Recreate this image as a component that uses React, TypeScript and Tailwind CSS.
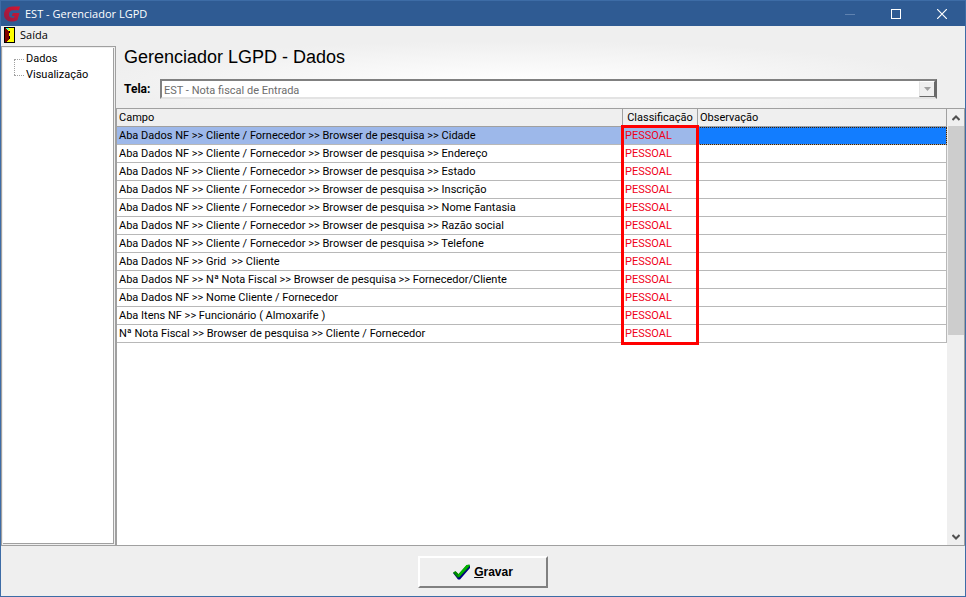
import { useState } from "react";

const tree = ["Dados", "Visualização"];

const rows = [
  "Aba Dados NF >> Cliente / Fornecedor >> Browser de pesquisa >> Cidade",
  "Aba Dados NF >> Cliente / Fornecedor >> Browser de pesquisa >> Endereço",
  "Aba Dados NF >> Cliente / Fornecedor >> Browser de pesquisa >> Estado",
  "Aba Dados NF >> Cliente / Fornecedor >> Browser de pesquisa >> Inscrição",
  "Aba Dados NF >> Cliente / Fornecedor >> Browser de pesquisa >> Nome Fantasia",
  "Aba Dados NF >> Cliente / Fornecedor >> Browser de pesquisa >> Razão social",
  "Aba Dados NF >> Cliente / Fornecedor >> Browser de pesquisa >> Telefone",
  "Aba Dados NF >> Grid  >> Cliente",
  "Aba Dados NF >> Nª Nota Fiscal >> Browser de pesquisa >> Fornecedor/Cliente",
  "Aba Dados NF >> Nome Cliente / Fornecedor",
  "Aba Itens NF >> Funcionário ( Almoxarife )",
  "Nª Nota Fiscal >> Browser de pesquisa >> Cliente / Fornecedor",
];

function Logo() {
  return (
    <svg width="16" height="16" viewBox="0 0 16 16">
      <defs>
        <linearGradient id="logo" x1="0" y1="1" x2="1" y2="0">
          <stop offset="0" stopColor="#8e1d45" />
          <stop offset="1" stopColor="#d8142f" />
        </linearGradient>
      </defs>
      <path
        d="M16 0.5L15 4.2H9C6.5 4.2 5 6 5 8.5C5 10.5 6.2 11.8 8.2 11.8H10L10.5 10H7.8L8.8 7H15.5L13.5 14C11.5 15.2 9 15.8 6.5 15.5C2.5 15 0 12.5 0 8.8C0 4 3.5 0.5 8.5 0.5Z"
        fill="url(#logo)"
      />
    </svg>
  );
}

function DoorIcon() {
  return (
    <svg width="11" height="16" viewBox="0 0 11 16" shapeRendering="crispEdges">
      <rect width="11" height="16" fill="#000" />
      <rect x="1" y="1" width="9" height="14" fill="#ff0" />
      <path d="M1 1H2V2H3V3H4V4H5V13H4V14H3V15H1Z" fill="#800000" />
      <path d="M2 1H4V2H5V3H4V2H2Z" fill="#0ff" />
      <path d="M5 4H6V6H5ZM5 9H6V12H5Z" fill="#000" />
    </svg>
  );
}

function CheckIcon() {
  return (
    <svg width="17" height="16" viewBox="0 0 17 16">
      <path d="M0 9L3 8L6 11L14 2L17 1.5V4L7 15.5H5Z" fill="#000080" />
      <path d="M0 8.5L2.5 7L5.5 10L13.5 1L16.5 0.5V2.5L6 13.5H4.5Z" fill="#008a00" />
      <path d="M5 11L13.5 1.2L16.5 0.8V1.5L6 13Z" fill="#00b400" />
    </svg>
  );
}

function Chevron({ down = false }: { down?: boolean }) {
  return (
    <svg width="8" height="6" viewBox="0 0 8 6">
      <path
        d={down ? "M0.5 1L4 4.5L7.5 1" : "M0.5 5L4 1.5L7.5 5"}
        fill="none"
        stroke="#505050"
        strokeWidth="2"
      />
    </svg>
  );
}

export default function App() {
  const [selected, setSelected] = useState(0);

  return (
    <div className="flex h-screen flex-col border border-t-0 border-[#3d6ca6] bg-[#efefef] font-[Roboto,sans-serif] text-[11px] leading-4 text-black">
      <header className="flex h-[26px] shrink-0 items-center border-t border-[#3d6ca6] bg-[#2f5b93] pl-[3px] text-white">
        <Logo />
        <h1 className="grow pl-[5px] font-['Open_Sans',sans-serif] text-[11px]">
          EST - Gerenciador LGPD
        </h1>
        <button aria-label="Minimizar" className="flex w-[46px] justify-center">
          <svg width="10" height="10" viewBox="0 0 10 10" shapeRendering="crispEdges">
            <path d="M0 5.5H10" stroke="#5f82b0" />
          </svg>
        </button>
        <button aria-label="Maximizar" className="flex w-[46px] justify-center">
          <svg width="10" height="10" viewBox="0 0 10 10" shapeRendering="crispEdges">
            <rect x="0.5" y="0.5" width="9" height="9" fill="none" stroke="#fff" />
          </svg>
        </button>
        <button aria-label="Fechar" className="flex w-[46px] justify-center">
          <svg width="10" height="10" viewBox="0 0 10 10">
            <path d="M0 0L10 10M10 0L0 10" stroke="#fff" strokeWidth="1.2" />
          </svg>
        </button>
      </header>

      <div className="flex min-h-0 grow">
        <aside className="flex w-[115px] shrink-0 flex-col">
          <nav className="h-5 shrink-0 pl-[3px] font-['Open_Sans',sans-serif] text-[11px]">
            <button className="flex h-[18px] items-center gap-[5px]">
              <DoorIcon />
              Saída
            </button>
          </nav>
          <div className="flex grow border border-[#a0a0a0] p-px">
            <ul className="grow border-r border-b border-[#a0a0a0] bg-white pt-[3px] pl-[11px]">
              {tree.map((item, i) => (
                <li key={item} className="relative flex h-4 items-center pl-3">
                  <span className="absolute top-2 left-0 w-[10px] border-t border-dotted border-[#a0a0a0]"></span>
                  {i > 0 && (
                    <span className="absolute -top-2 left-0 h-4 border-l border-dotted border-[#a0a0a0]"></span>
                  )}
                  {item}
                </li>
              ))}
            </ul>
          </div>
        </aside>

        <main className="flex min-w-0 grow flex-col">
          <section className="h-[82px] shrink-0 bg-[radial-gradient(50%_50%_at_47%_68%,#ffffff,#efefef)] pt-5 pr-7 pl-2">
            <h2 className="h-[33px] font-['Liberation_Sans',sans-serif] text-[18px] leading-[22px]">
              Gerenciador LGPD - Dados
            </h2>
            <div className="flex h-5 items-center">
              <label htmlFor="tela" className="w-9 text-[12px] font-bold">
                Tela:
              </label>
              <div className="relative grow">
                <select
                  id="tela"
                  disabled
                  className="block h-5 w-full appearance-none border-2 border-t-[#808080] border-r-[#696969] border-b-[#e3e3e3] border-l-[#808080] bg-white pt-[2px] pl-[2px] text-[#6d6d6d] opacity-100"
                >
                  <option>EST - Nota fiscal de Entrada</option>
                </select>
                <span className="pointer-events-none absolute top-[2px] right-[2px] flex h-4 w-4 items-center justify-center border border-t-white border-r-[#696969] border-b-[#696969] border-l-[#e3e3e3] bg-[#efefef]">
                  <svg width="7" height="4" viewBox="0 0 7 4">
                    <path d="M0 0H7L3.5 4Z" fill="#a0a0a0" />
                  </svg>
                </span>
              </div>
            </div>
          </section>

          <section className="flex min-h-0 grow border border-[#a0a0a0] bg-white">
            <div className="min-w-0 grow">
              <div className="relative">
                <table className="w-full table-fixed border-separate border-spacing-0 text-left">
                  <thead>
                    <tr className="h-[18px] bg-[#efefef]">
                      <th className="border-r border-b border-[#a0a0a0] px-[2px] pt-px pb-0 font-normal">
                        Campo
                      </th>
                      <th className="w-[75px] border-r border-b border-[#a0a0a0] px-[2px] pt-px pb-0 text-center font-normal">
                        Classificação
                      </th>
                      <th className="w-[249px] border-r border-b border-[#a0a0a0] px-[2px] pt-px pb-0 font-normal">
                        Observação
                      </th>
                    </tr>
                  </thead>
                  <tbody>
                    {rows.map((row, i) => (
                      <tr
                        key={row}
                        onClick={() => setSelected(i)}
                        className={
                          i === selected ? "h-[18px] bg-[#9db8ea]" : "h-[18px]"
                        }
                      >
                        <td className="truncate border-r border-b border-[#b8b8b8] px-[2px] pt-px pb-0 whitespace-pre">
                          {row}
                        </td>
                        <td className="border-r border-b border-[#b8b8b8] px-[2px] pt-px pb-0 text-[#f00018]">
                          PESSOAL
                        </td>
                        <td
                          className={
                            i === selected
                              ? "border-r border-b border-[#a0a0a0] bg-[#127dff] outline-1 -outline-offset-1 outline-dotted outline-[#402000]"
                              : "border-r border-b border-[#b8b8b8]"
                          }
                        ></td>
                      </tr>
                    ))}
                  </tbody>
                </table>
                <div className="pointer-events-none absolute top-4 right-[248px] -bottom-[2px] w-[78px] border-[3px] border-[#f00]"></div>
              </div>
            </div>
            <div className="flex w-[17px] shrink-0 flex-col bg-[#efefef] pl-px">
              <button aria-label="Subir" className="flex h-[17px] shrink-0 items-center justify-center">
                <Chevron />
              </button>
              <div className="grow">
                <div className="h-[52%] bg-[#cdcdcd]"></div>
              </div>
              <button aria-label="Descer" className="flex h-[17px] shrink-0 items-center justify-center">
                <Chevron down />
              </button>
            </div>
          </section>
        </main>
      </div>

      <footer className="flex h-[50px] shrink-0 justify-center pt-[10px]">
        <button className="flex h-8 w-[130px] items-center justify-center gap-1 border-2 border-t-white border-r-[#808080] border-b-[#808080] border-l-white bg-[#efefef] font-['Liberation_Sans',sans-serif] text-[12px] font-bold">
          <CheckIcon />
          <span>
            <u>G</u>ravar
          </span>
        </button>
      </footer>
    </div>
  );
}
